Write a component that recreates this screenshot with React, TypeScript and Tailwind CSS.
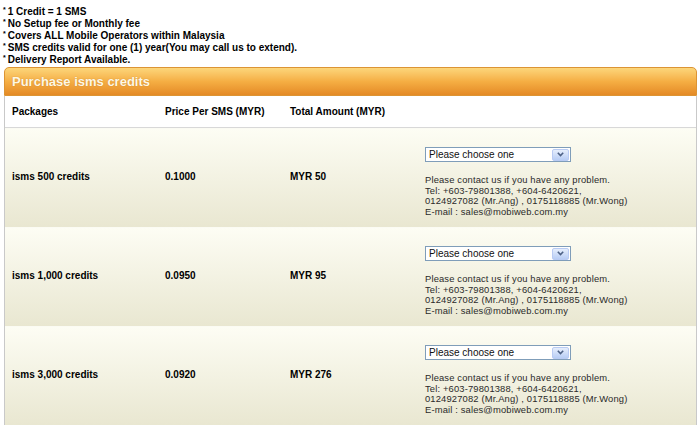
import React from 'react';

interface Pkg {
  name: string;
  price: string;
  total: string;
}

const packages: Pkg[] = [
  { name: 'isms 500 credits', price: '0.1000', total: 'MYR 50' },
  { name: 'isms 1,000 credits', price: '0.0950', total: 'MYR 95' },
  { name: 'isms 3,000 credits', price: '0.0920', total: 'MYR 276' },
];

const notes = [
  '1 Credit = 1 SMS',
  'No Setup fee or Monthly fee',
  'Covers ALL Mobile Operators within Malaysia',
  'SMS credits valid for one (1) year(You may call us to extend).',
  'Delivery Report Available.',
];

const ChooseBox = () => (
  <div className="flex h-[15px] w-[146px] items-center border border-[#7f9db9] bg-white">
    <span className="flex-1 pl-[3px] text-[10px] leading-none text-[#111]">Please choose one</span>
    <span className="m-[1px] flex h-[12px] w-[17px] items-center justify-center rounded-[2px] border border-[#b9cbf3] bg-gradient-to-b from-[#e6eefc] to-[#b8cdf5]">
      <svg width="7" height="5" viewBox="0 0 7 5">
        <path d="M0.8 0.8 L3.5 3.5 L6.2 0.8" fill="none" stroke="#4d6185" strokeWidth="1.6" />
      </svg>
    </span>
  </div>
);

const Contact = () => (
  <div className="mt-[13px] text-[9.4px] leading-[10.6px] text-[#2a2a2a] tracking-[0.15px]">
    <p>Please contact us if you have any problem.</p>
    <p>Tel: +603-79801388, +604-6420621,</p>
    <p>0124927082 (Mr.Ang) , 0175118885 (Mr.Wong)</p>
    <p>E-mail : sales@mobiweb.com.my</p>
  </div>
);

export default function App() {
  return (
    <div className="h-[425px] w-[700px] overflow-hidden bg-white font-['Liberation_Sans',Arial,sans-serif]">
      <ul className="pl-[3px] pt-[6px] text-[10px] font-bold leading-[12px] text-black">
        {notes.map((n) => (
          <li key={n} className="flex">
            <span className="mr-[2px] text-[7px] leading-[8px]">*</span>
            <span>{n}</span>
          </li>
        ))}
      </ul>

      <div className="mx-[4px] mt-[1px] w-[693px]">
        <div className="flex h-[29px] items-center rounded-t-[5px] border border-[#dc9434] bg-gradient-to-b from-[#fcd67a] via-[#f5ae43] to-[#e48a25] pl-[7px]">
          <span className="text-[13px] font-bold text-[#fff8e4] [text-shadow:0_0_1px_rgba(150,80,0,0.5)]">
            Purchase isms credits
          </span>
        </div>

        <div className="border-x border-[#c9c9c9]">
          <div className="grid h-[32px] grid-cols-[153px_125px_135px_1fr] items-center border-b border-[#d8d8d8] bg-white pl-[7px] text-[10px] font-bold text-black">
            <span>Packages</span>
            <span>Price Per SMS (MYR)</span>
            <span>Total Amount (MYR)</span>
            <span />
          </div>

          {packages.map((p) => (
            <div
              key={p.name}
              className="grid h-[99px] grid-cols-[153px_125px_135px_1fr] border-t border-[#fbfbf3] bg-gradient-to-b from-[#fdfdf4] to-[#e9e7d1] pb-[4px] pl-[7px] text-[10px] font-bold text-black"
            >
              <span className="self-center">{p.name}</span>
              <span className="self-center">{p.price}</span>
              <span className="self-center">{p.total}</span>
              <div className="pt-[18px] font-normal">
                <ChooseBox />
                <Contact />
              </div>
            </div>
          ))}
        </div>
      </div>
    </div>
  );
}
